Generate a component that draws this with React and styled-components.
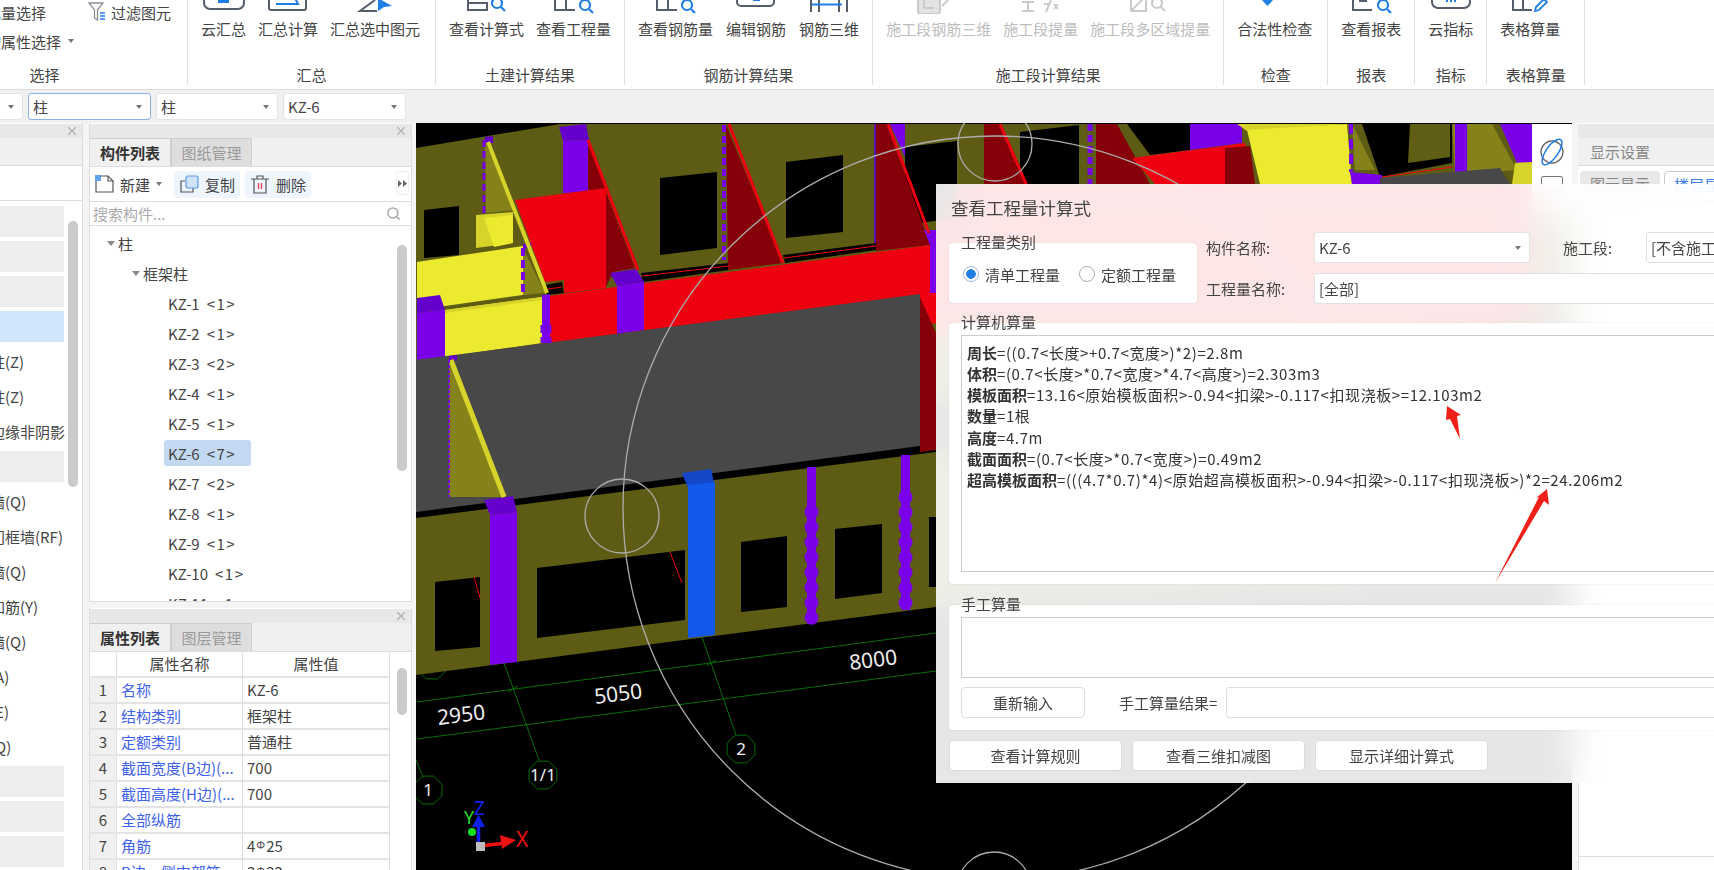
import React from "react";
import styled, { createGlobalStyle } from "styled-components";
import { X, Search } from "lucide-react";

const GlobalStyle = createGlobalStyle`
  html, body {
    margin: 0;
    padding: 0;
    width: 1714px;
    height: 870px;
    overflow: hidden;
    background: #f5f5f5;
  }
  * { box-sizing: border-box; }
  body {
    font-family: "Noto Sans CJK SC", "Noto Sans", sans-serif;
    font-size: 15px;
    color: #444;
  }
`;

const Rebar = styled.span`
  position: relative;
  top: -3px;
  margin: 0 1px;
  font-size: 11px;
`;

// ribbon icons are cut off by the top of the window, only the lower part shows
const gray = "#565e6c";
const blue = "#1f7de6";
const off = "#cbcbcb";

const Mag = ({ x, y, r = 5, c = blue }) => (
  <g fill="none" stroke={c} strokeWidth="2.2">
    <circle cx={x} cy={y} r={r} />
    <path d={`M${x + r - 1} ${y + r - 1}l4 4`} />
  </g>
);

const icons = {
  cloud: (
    <>
      <rect x="5" y="-9" width="40" height="18" rx="6" fill="none" stroke={gray} strokeWidth="2" />
      <rect x="19" y="-3" width="11" height="6" fill={blue} />
    </>
  ),
  sum: (
    <>
      <rect x="6" y="-9" width="37" height="19" rx="2" fill="none" stroke={gray} strokeWidth="2" />
      <path d="M13 4h22l-4-8" fill="none" stroke={blue} strokeWidth="2" />
    </>
  ),
  pick: (
    <>
      <path d="M25 0L10 11h17" fill="none" stroke={gray} strokeWidth="2" />
      <path d="M28-2l14 8-8 1-6 4z" fill={blue} />
    </>
  ),
  calc: (
    <>
      <path d="M6-3v13h19V3H6" fill="none" stroke={gray} strokeWidth="2" />
      <Mag x={35} y={3} />
    </>
  ),
  qty: (
    <>
      <path d="M6-5v15h20M17-5v15" fill="none" stroke={gray} strokeWidth="2" />
      <Mag x={36} y={5} />
    </>
  ),
  edit: (
    <>
      <rect x="6" y="-11" width="37" height="17" rx="4" fill="none" stroke={gray} strokeWidth="2" />
      <rect x="22" y="-2" width="7" height="3" fill={blue} />
    </>
  ),
  rebar3d: (
    <>
      <path d="M7 0v12M15 0v12M35 0v12M43 0v12" fill="none" stroke={gray} strokeWidth="2" />
      <path d="M8 4.5h30" fill="none" stroke={blue} strokeWidth="2" />
    </>
  ),
  off3d: (
    <>
      <rect x="4" y="-8" width="22" height="22" rx="3" fill="#e3e3e3" stroke={off} strokeWidth="2" />
      <path d="M10 0v8h10M28 6l6-6" fill="none" stroke={off} strokeWidth="2" />
    </>
  ),
  offFx: (
    <path d="M6 2h12M12 2v9M6 11h12M30 12l5-12M28 4h6M38 4l4 5M42 4l-4 5" fill="none" stroke={off} strokeWidth="2" />
  ),
  offArea: (
    <>
      <rect x="6" y="-4" width="15" height="15" fill="none" stroke={off} strokeWidth="2" />
      <path d="M7 10L20-3" stroke={off} strokeWidth="2" />
      <Mag x={32} y={3} r={5} c={off} />
    </>
  ),
  check: <path d="M11-1h13l-6.5 7z" fill={blue} />,
  report: (
    <>
      <path d="M7-5v15h19" fill="none" stroke={gray} strokeWidth="2" />
      <rect x="13" y="-1" width="8" height="3" fill={gray} />
      <Mag x={37} y={5} />
    </>
  ),
  index: (
    <>
      <rect x="6" y="-11" width="38" height="19" rx="6" fill="none" stroke={gray} strokeWidth="2" />
      <path d="M21 0v2M25-1v3M29 0v2" stroke={blue} strokeWidth="2" />
    </>
  ),
  table: (
    <>
      <path d="M8-5v15h19M18-5v15" fill="none" stroke={gray} strokeWidth="2" />
      <path d="M30 11l1-4 8-8 3 3-8 8z" fill="none" stroke={blue} strokeWidth="1.8" />
    </>
  ),
};

const RibbonBtn = ({ icon, label, disabled }) => (
  <RibbonButton $disabled={disabled}>
    <svg width="50" height="14" viewBox="0 0 50 14">{icons[icon]}</svg>
    <span>{label}</span>
  </RibbonButton>
);

const ribbonGroups = [
  { title: "汇总", pad: 15, items: [["cloud", "云汇总"], ["sum", "汇总计算"], ["pick", "汇总选中图元"]] },
  { title: "土建计算结果", items: [["calc", "查看计算式"], ["qty", "查看工程量"]] },
  { title: "钢筋计算结果", gap: 13, items: [["qty", "查看钢筋量"], ["edit", "编辑钢筋"], ["rebar3d", "钢筋三维"]] },
  { title: "施工段计算结果", off: true, items: [["off3d", "施工段钢筋三维"], ["offFx", "施工段提量"], ["offArea", "施工段多区域提量"]] },
  { title: "检查", pad: 15, items: [["check", "合法性检查"]] },
  { title: "报表", items: [["report", "查看报表"]] },
  { title: "指标", items: [["index", "云指标"]] },
  { title: "表格算量", width: 98, items: [["table", "表格算量"]] },
];

const leftItems = [
  null, null, null, { active: true }, { text: "构造柱(Z)" }, { text: "砌体柱(Z)" }, { text: "约束边缘非阴影" },
  null, { text: "砌体墙(Q)" }, { text: "人防门框墙(RF)" }, { text: "砌体墙(Q)" }, { text: "砌体加筋(Y)" },
  { text: "保温墙(Q)" }, { text: "暗梁(A)" }, { text: "墙垛(E)" }, { text: "幕墙(Q)" }, null, null, null,
];

const kzList = [
  ["KZ-1", 1], ["KZ-2", 1], ["KZ-3", 2], ["KZ-4", 1], ["KZ-5", 1], ["KZ-6", 7],
  ["KZ-7", 2], ["KZ-8", 1], ["KZ-9", 1], ["KZ-10", 1], ["KZ-11", 1],
];

const props = [
  ["名称", "KZ-6"],
  ["结构类别", "框架柱"],
  ["定额类别", "普通柱"],
  ["截面宽度(B边)(...", "700"],
  ["截面高度(H边)(...", "700"],
  ["全部纵筋", ""],
  ["角筋", <>4<Rebar>Φ</Rebar>25</>],
  ["B边一侧中部筋", <>3<Rebar>Φ</Rebar>22</>],
];

const formulas = [
  ["周长", "=((0.7<长度>+0.7<宽度>)*2)=2.8m"],
  ["体积", "=(0.7<长度>*0.7<宽度>*4.7<高度>)=2.303m3"],
  ["模板面积", "=13.16<原始模板面积>-0.94<扣梁>-0.117<扣现浇板>=12.103m2"],
  ["数量", "=1根"],
  ["高度", "=4.7m"],
  ["截面面积", "=(0.7<长度>*0.7<宽度>)=0.49m2"],
  ["超高模板面积", "=(((4.7*0.7)*4)<原始超高模板面积>-0.94<扣梁>-0.117<扣现浇板>)*2=24.206m2"],
];

// 3D model, in page coordinates (the svg viewBox starts at the canvas corner)
const olive = "#5e5c14";
const fin = "#85821a";
const yellow = "#ecea2e";
const yellow2 = "#d6d32a";
const red = "#ee0010";
const dark = "#850008";
const purple = "#7a00ea";
const cap = "#6500cc";
const wallGray = "#484848";

const shapes = [
  [olive, "416,148 560,124 1572,124 1572,330 416,470"],
  // things behind the dialog, they only tint its glass
  [red, "936,186 1532,186 1532,335 936,335"],
  [olive, "936,450 1532,400 1532,560 936,607"],
  // back wall windows
  ["#000", "424,210 459,206 459,255 424,258"],
  ["#000", "660,178 717,172 717,248 660,255"],
  ["#000", "786,162 843,155 843,232 786,238"],
  ["#000", "905,147 957,141 957,218 905,225"],
  ["#000", "1020,132 1079,125 1079,184 1020,184"],
  ["#000", "1127,124 1190,124 1190,150 1150,155"],
  ["#000", "1362,124 1452,124 1452,163 1380,177"],
  ["#605e14", "1410,124 1450,124 1450,157 1408,163"],
  ["#000", "641,273 729,263 729,270 643,282"],
  ["#000", "783,255 876,243 876,250 785,263"],
  // fins and top columns
  [cap, "559,127 586,124 589,140 563,141"],
  [purple, "563,141 588,140 588,192 563,193"],
  [dark, "588,140 606,190 588,190"],
  [red, "515,200 606,188 606,288 564,293 564,280 545,282"],
  [dark, "606,192 635,268 613,272 606,287"],
  [dark, "726,125 783,263 728,270"],
  ["#5a10b0", "874,124 877,124 877,243 874,243"],
  [dark, "876,124 887,124 925,230 930,245 876,251"],
  [purple, "890,124 905,124 905,157"],
  [red, "548,296 930,245 936,244 1400,200 1400,300 548,343"],
  [purple, "924,230 936,230 936,293 930,293 930,245"],
  [cap, "610,273 636,269 644,282 617,286"],
  [purple, "617,286 644,282 644,330 617,334"],
  [dark, "984,124 1000,124 1025,184 984,184"],
  [dark, "1096,124 1117,124 1150,184 1096,184"],
  [red, "1132,158 1245,143 1255,184 1155,184"],
  [purple, "1190,124 1242,124 1242,143 1190,150"],
  [dark, "1225,148 1250,146 1255,184 1225,184"],
  [yellow2, "1237,124 1347,124 1247,131"],
  [yellow, "1247,130 1347,124 1352,184 1260,184"],
  [fin, "1352,124 1375,170 1355,170"],
  [fin, "1452,124 1492,124 1517,170 1455,175"],
  [purple, "1455,124 1467,124 1467,172 1455,175"],
  [purple, "1350,172 1382,175 1382,184 1352,184"],
  [wallGray, "1380,178 1500,168 1510,184 1380,184"],
  [purple, "1500,124 1532,124 1532,162 1517,163"],
  [yellow2, "1515,163 1532,162 1532,184 1512,184"],
  // left side, yellow block
  [fin, "485,142 516,210 486,213"],
  [yellow2, "476,215 513,212 513,243 476,248"],
  [yellow, "484,218 513,215 513,243 494,247"],
  [yellow, "417,262 523,246 523,295 417,310"],
  [fin, "523,248 545,293 523,295"],
  ["#000", "545,285 562,282 564,293 547,295"],
  [yellow, "445,310 542,297 542,343 445,357"],
  [yellow2, "445,310 542,297 542,300 445,313"],
  [purple, "542,295 550,294 550,343 542,343"],
  [cap, "417,298 440,295 445,310 417,313"],
  [purple, "417,313 445,310 445,357 417,360"],
  [cap, "485,137 493,136 493,143 485,143"],
  [cap, "523,244 531,243 531,248 523,249"],
  // gray wall
  [wallGray, "416,360 920,294 920,446 416,512"],
  [dark, "920,297 936,333 936,450 920,452"],
  [fin, "449,360 505,497 449,497"],
  [cap, "449,356 457,355 457,360 449,361"],
  // front wall
  [olive, "416,518 936,452 936,607 416,675"],
  ["#000", "435,582 480,577 480,647 435,651"],
  ["#000", "537,568 685,550 685,620 537,638"],
  ["#000", "741,542 787,536 787,607 741,612"],
  ["#000", "835,529 882,524 882,593 835,599"],
  ["#000", "929,517 936,517 936,587 929,587"],
  [cap, "484,500 513,496 517,512 490,515"],
  [purple, "490,515 517,512 517,662 490,665"],
  ["#1248c8", "682,473 711,469 715,487 688,488"],
  ["#1458ea", "688,485 715,482 715,635 688,638"],
];

const lines = [
  [red, 3, "M588 140L638 270"],
  [red, 3, "M729 124L783 263"],
  [red, 3, "M888 124L929 233"],
  [red, 3, "M1000 124L1027 186"],
  [red, 1, "M642 276L729 266"],
  [red, 1, "M784 258L876 246"],
  [red, 1, "M1382 177L1452 167"],
  [red, 1, "M548 289L562 287"],
  [red, 1, "M474 577L480 598"],
  [red, 1, "M670 552L682 583"],
  [yellow2, 4, "M488 142L547 293"],
  [yellow2, 5, "M451 360L504 497"],
  ["#0a6e0a", 1, "M417 702L936 633"],
  ["#0a6e0a", 1, "M417 739L936 671"],
  ["#0a6e0a", 1, "M504 663L539 760"],
  ["#0a6e0a", 1, "M702 637L736 735"],
  ["#0a6e0a", 1, "M416 760L423 777"],
  ["#0a6e0a", 1, "M508 692L518 686"],
  ["#0a6e0a", 1, "M706 666L716 660"],
];

// x, from, to, width, dash, gap
const beads = [
  [484, 140, 215, 3, 7, 4],
  [523, 248, 295, 4, 8, 4],
  [546, 325, 343, 11, 8, 4],
  [724, 125, 260, 4, 7, 4],
  [1090, 124, 184, 5, 7, 4],
  [1351, 124, 172, 4, 10, 5],
  [449, 360, 497, 2, 3, 2],
];

const bumps = [
  [811.5, 512, 618],
  [905.5, 497, 605],
];

const hexes = [
  [428, 790, "1"],
  [543, 775, "1/1"],
  [741, 749, "2"],
  [432, 665, ""],
];

const dims = [
  [462, 722, "2950"],
  [619, 701, "5050"],
  [874, 667, "8000"],
];

const hexPoints = (cx, cy, r) =>
  [...Array(8)]
    .map((_, i) => {
      const a = (Math.PI / 4) * i + Math.PI / 8;
      return `${(cx + r * Math.cos(a)).toFixed(1)},${(cy + r * Math.sin(a)).toFixed(1)}`;
    })
    .join(" ");

const Model = () => (
  <ModelSvg viewBox="416 123 1156 747">
    {hexes.map(([x, y]) => (
      <polygon key={x} points={hexPoints(x, y, 15)} fill="none" stroke="#0a6e0a" strokeWidth="1" />
    ))}
    {shapes.map(([c, p], i) => (
      <polygon key={i} fill={c} points={p} />
    ))}
    {lines.map(([c, w, d], i) => (
      <path key={i} d={d} stroke={c} strokeWidth={w} fill="none" />
    ))}
    <path d="M811.5 467V623M905.5 455V610" stroke={purple} strokeWidth="9" />
    {beads.map(([x, a, b, w, dash, gap], i) => (
      <path key={i} d={`M${x} ${a}V${b}`} stroke={purple} strokeWidth={w} strokeDasharray={`${dash} ${gap}`} fill="none" />
    ))}
    {bumps.map(([x, a, b]) => (
      <path key={x} d={`M${x} ${a}V${b}`} stroke={purple} strokeWidth="14" strokeLinecap="round" strokeDasharray="0.1 15" fill="none" />
    ))}
    <g fill="none" stroke="#acacac" strokeWidth="1.3">
      <circle cx="995" cy="508" r="372" />
      <circle cx="995" cy="144" r="37" />
      <circle cx="622" cy="516" r="37" />
      <circle cx="994" cy="889" r="37" />
    </g>
    {hexes.map(([x, y, t]) => (
      <AxisText key={x} x={x} y={y + 6} textAnchor="middle" fontSize="17" fill="#eee">
        {t}
      </AxisText>
    ))}
    {dims.map(([x, y, t]) => (
      <AxisText key={t} x={x} y={y} textAnchor="middle" fontSize="21" fill="#eee" transform={`rotate(-7 ${x} ${y})`}>
        {t}
      </AxisText>
    ))}
    <path d="M480 846L506 843" stroke="#ee1111" strokeWidth="3.5" />
    <polygon points="516,840 500,835 502,849" fill="#ee1111" />
    <AxisText x="516" y="847" fontSize="21" fill="#ee1111">X</AxisText>
    <path d="M478.5 842V824" stroke="#1020ee" strokeWidth="3.5" />
    <polygon points="478.5,815 472,827 485,827" fill="#1020ee" />
    <AxisText x="474" y="815" fontSize="19" fill="#1020ee">Z</AxisText>
    <AxisText x="464" y="824" fontSize="18" fill="#22dd22">Y</AxisText>
    <circle cx="472" cy="832" r="4" fill="#18e018" />
    <rect x="476" y="842" width="9" height="9" fill="#bdbdbd" />
  </ModelSvg>
);

const Dropdown = ({ value, width, focus, height = 27 }) => (
  <SelectBox $width={width} $focus={focus} $height={height}>
    <span>{value}</span>
    <Caret />
  </SelectBox>
);

const App = () => (
  <>
    <GlobalStyle />
    <Page>
      <Ribbon>
        <SelectGroup>
          <SelectBody>
            <PickColumn>
              <PickRow>批量选择</PickRow>
              <PickRow>
                按属性选择
                <Caret $left={7} />
              </PickRow>
            </PickColumn>
            <FilterRow>
              <svg width="19" height="22" viewBox="0 0 19 22">
                <path d="M1 2h14l-5.5 7v10l-3-2V9z" fill="none" stroke="#8a8f98" strokeWidth="1.3" />
                <path d="M12 12h5M12 15h5M12 18h5" stroke={blue} strokeWidth="1.3" />
              </svg>
              过滤图元
            </FilterRow>
          </SelectBody>
          <GroupTitle>选择</GroupTitle>
        </SelectGroup>
        {ribbonGroups.map((g) => (
          <RibbonGroup key={g.title} $width={g.width}>
            <GroupBody $gap={g.gap} $pad={g.pad}>
              {g.items.map(([icon, label]) => (
                <RibbonBtn key={label} icon={icon} label={label} disabled={g.off} />
              ))}
            </GroupBody>
            <GroupTitle>{g.title}</GroupTitle>
          </RibbonGroup>
        ))}
      </Ribbon>

      <FilterBar>
        <Dropdown value="" width={100} />
        <Dropdown value="柱" width={123} focus />
        <Dropdown value="柱" width={122} />
        <Dropdown value="KZ-6" width={123} />
      </FilterBar>

      <Workspace>
        <NavPanel>
          <PaneHeader>
            <X size={14} />
          </PaneHeader>
          <NavTabs />
          <NavTools />
          <NavList>
            {leftItems.map((it, i) =>
              it && it.text ? (
                <NavText key={i}>{it.text}</NavText>
              ) : (
                <NavBlock key={i} $active={it && it.active} />
              )
            )}
          </NavList>
          <Thumb $top={98} $left={108} $height={266} />
        </NavPanel>

        <MiddleColumn>
          <TreePane>
            <PaneHeader>
              <X size={14} />
            </PaneHeader>
            <TabRow>
              <Tab $active>构件列表</Tab>
              <Tab>图纸管理</Tab>
            </TabRow>
            <ToolRow>
              <ToolItem>
                <svg width="20" height="20" viewBox="0 0 20 20">
                  <path d="M6 2h8l5 5v11H2V7" fill="none" stroke="#555" strokeWidth="1.2" />
                  <path d="M14 2v5h5" fill="none" stroke="#555" strokeWidth="1.2" />
                  <rect x="1" y="1" width="6" height="6" fill={blue} opacity=".7" />
                </svg>
                新建
                <Caret />
              </ToolItem>
              <ToolItem $boxed>
                <svg width="20" height="20" viewBox="0 0 20 20">
                  <path d="M6 7H2v11h12v-4" fill="none" stroke="#555" strokeWidth="1.2" />
                  <rect x="7" y="2" width="12" height="12" rx="2" fill="#cfe3fb" stroke="#5a9be8" strokeWidth="1.2" />
                </svg>
                复制
              </ToolItem>
              <ToolItem $boxed>
                <svg width="20" height="20" viewBox="0 0 20 20">
                  <path d="M4 5v14h12V5M1 5h18M7 5V2h6v3" fill="none" stroke="#555" strokeWidth="1.2" />
                  <path d="M8.5 9v6M11.5 9v6" stroke="#e8455a" strokeWidth="1.4" />
                </svg>
                删除
              </ToolItem>
              <MoreButton>
                <svg width="9" height="7" viewBox="0 0 9 7">
                  <path d="M0 0l4 3.5-4 3.5zM5 0l4 3.5-4 3.5z" fill="#666" />
                </svg>
              </MoreButton>
            </ToolRow>
            <SearchRow>
              搜索构件...
              <Search size={15} color="#aaa" strokeWidth={2.4} />
            </SearchRow>
            <Tree>
              <TreeRow $indent={17}>
                <TreeCaret />柱
              </TreeRow>
              <TreeRow $indent={42}>
                <TreeCaret />框架柱
              </TreeRow>
              {kzList.map(([name, n]) => (
                <TreeRow key={name} $indent={74}>
                  <TreeLeaf $active={name === "KZ-6"}>
                    {name}
                    <TreeCount>&lt;{n}&gt;</TreeCount>
                  </TreeLeaf>
                </TreeRow>
              ))}
            </Tree>
            <Thumb $top={122} $left={307} $height={226} />
          </TreePane>

          <PropPane>
            <PaneHeader>
              <X size={14} />
            </PaneHeader>
            <TabRow>
              <Tab $active>属性列表</Tab>
              <Tab>图层管理</Tab>
            </TabRow>
            <PropGrid>
              <PropHead />
              <PropHead>属性名称</PropHead>
              <PropHead>属性值</PropHead>
              {props.map(([name, value], i) => (
                <React.Fragment key={i}>
                  <PropIndex>{i + 1}</PropIndex>
                  <PropName>{name}</PropName>
                  <PropValue>{value}</PropValue>
                </React.Fragment>
              ))}
            </PropGrid>
            <Thumb $top={60} $left={307} $height={47} />
          </PropPane>
        </MiddleColumn>

        <Canvas>
          <Model />
          <ViewTools>
            <svg width="30" height="30" viewBox="0 0 30 30">
              <circle cx="15" cy="15" r="11" fill="none" stroke="#666" strokeWidth="1.3" />
              <ellipse cx="15" cy="15" rx="15" ry="6" transform="rotate(-55 15 15)" fill="none" stroke={blue} strokeWidth="1.5" />
            </svg>
            <ViewSquare />
          </ViewTools>
        </Canvas>

        <SidePanel>
          <PaneHeader />
          <SideTitle>显示设置</SideTitle>
          <SideTabs>
            <SideTab>图元显示</SideTab>
            <SideTab $active>楼层显示</SideTab>
          </SideTabs>
          <SideBody />
          <SideFoot />
        </SidePanel>
      </Workspace>

      <Dialog>
        <DialogTitle>查看工程量计算式</DialogTitle>
        <DialogBody>
          <TopRow>
            <TypeBox>
              <Legend>工程量类别</Legend>
              <RadioLabel>
                <Radio $checked />
                清单工程量
              </RadioLabel>
              <RadioLabel>
                <Radio />
                定额工程量
              </RadioLabel>
            </TypeBox>
            <FieldColumn>
              <FieldRow>
                <FieldLabel $width={108}>构件名称:</FieldLabel>
                <Dropdown value="KZ-6" width={216} height={31} />
                <FieldLabel $width={83} $left={33}>施工段:</FieldLabel>
                <TextField $width={210}>[不含施工段]</TextField>
              </FieldRow>
              <FieldRow>
                <FieldLabel $width={108}>工程量名称:</FieldLabel>
                <TextField $width={600}>[全部]</TextField>
              </FieldRow>
            </FieldColumn>
          </TopRow>

          <FormulaGroup>
            <Legend>计算机算量</Legend>
            <FormulaArea>
              {formulas.map(([k, v]) => (
                <FormulaLine key={k}>
                  <b>{k}</b>
                  {v}
                </FormulaLine>
              ))}
            </FormulaArea>
          </FormulaGroup>

          <ManualGroup>
            <Legend>手工算量</Legend>
            <ManualArea />
            <ManualRow>
              <DialogButton $width={124}>重新输入</DialogButton>
              <FieldLabel $left={34} $width={107}>手工算量结果=</FieldLabel>
              <TextField $width={600} />
            </ManualRow>
          </ManualGroup>

          <FootRow>
            <DialogButton $width={173}>查看计算规则</DialogButton>
            <DialogButton $width={173}>查看三维扣减图</DialogButton>
            <DialogButton $width={173}>显示详细计算式</DialogButton>
          </FootRow>
        </DialogBody>

        {/* red arrows drawn on the screenshot */}
        <Arrows viewBox="936 184 778 599">
          <polygon points="1447,406 1461,415 1457,416 1460,439 1450,419 1446,420" fill="#f02018" />
          <polygon points="1547,489 1549,505 1544,501 1495,583 1539,497 1536,498" fill="#f02018" />
        </Arrows>
      </Dialog>
    </Page>
  </>
);

const Page = styled.div`
  position: relative;
  width: 1714px;
  height: 870px;
  overflow: hidden;
`;

const Ribbon = styled.div`
  display: flex;
  height: 90px;
  background: #fff;
  border-bottom: 1px solid #dcdcdc;
  overflow: hidden;
`;

const RibbonGroup = styled.div`
  display: flex;
  flex-direction: column;
  flex: none;
  width: ${(p) => (p.$width ? p.$width + "px" : "auto")};
  height: 85px;
  border-right: 1px solid #e0e0e0;
`;

const SelectGroup = styled(RibbonGroup)`
  width: 286px;
  margin-left: -98px;
`;

const GroupBody = styled.div`
  display: flex;
  gap: ${(p) => p.$gap || 12}px;
  height: 66px;
  padding: 0 ${(p) => p.$pad || 13}px 0 13px;
`;

const SelectBody = styled(GroupBody)`
  margin-top: -2px;
  height: 68px;
`;

const GroupTitle = styled.div`
  height: 20px;
  line-height: 20px;
  text-align: center;
  color: #444;
`;

const RibbonButton = styled.div`
  display: flex;
  flex-direction: column;
  align-items: center;
  white-space: nowrap;
  color: ${(p) => (p.$disabled ? "#bdbdbd" : "#444")};

  svg {
    display: block;
    flex: none;
    margin: 0 -15px;
  }

  span {
    margin-top: 5px;
    line-height: 20px;
  }
`;

const PickColumn = styled.div`
  flex: none;
  width: 90px;
  margin-left: 71px;
  display: flex;
  flex-direction: column;
  gap: 1px;
`;

const PickRow = styled.div`
  display: flex;
  align-items: center;
  height: 28px;
  white-space: nowrap;
`;

const FilterRow = styled(PickRow)`
  flex: none;
  gap: 4px;
`;

const Caret = styled.i`
  flex: none;
  width: 0;
  height: 0;
  margin-left: ${(p) => (p.$left ? p.$left + "px" : "0")};
  border-left: 3px solid transparent;
  border-right: 3px solid transparent;
  border-top: 4px solid #777;
`;

const FilterBar = styled.div`
  display: flex;
  gap: 5px;
  height: 33px;
  padding-top: 3px;
  margin-left: -77px;
  background: #f0f0f0;
`;

const SelectBox = styled.div`
  display: flex;
  align-items: center;
  justify-content: space-between;
  flex: none;
  width: ${(p) => p.$width}px;
  height: ${(p) => p.$height}px;
  padding: 0 8px 0 4px;
  background: #fff;
  border: 1px solid ${(p) => (p.$focus ? "#8ab4e8" : "#e4e4e4")};
  border-radius: 3px;
  white-space: nowrap;
`;

const Workspace = styled.div`
  display: flex;
  height: 747px;
  margin-left: -40px;
`;

const NavPanel = styled.div`
  position: relative;
  flex: none;
  width: 123px;
  background: #fff;
  border-right: 1px solid #ddd;
`;

const PaneHeader = styled.div`
  display: flex;
  align-items: center;
  justify-content: flex-end;
  height: 14px;
  margin-top: 1px;
  padding-right: 3px;
  background: #e8e8e8;
  color: #b0b0b0;
`;

const NavTabs = styled.div`
  height: 28px;
  background: #f0f0f0;
  border-bottom: 1px solid #ddd;
`;

const NavTools = styled.div`
  height: 35px;
  border-bottom: 1px solid #ddd;
`;

const NavList = styled.div`
  display: flex;
  flex-direction: column;
  gap: 4px;
  width: 104px;
  padding-top: 5px;
`;

const NavBlock = styled.div`
  height: 31px;
  background: ${(p) => (p.$active ? "#d2e6fb" : "#ededed")};
`;

const NavText = styled.div`
  height: 31px;
  line-height: 31px;
  white-space: nowrap;
`;

const Thumb = styled.div`
  position: absolute;
  top: ${(p) => p.$top}px;
  left: ${(p) => p.$left}px;
  width: 10px;
  height: ${(p) => p.$height}px;
  background: #cbcbcb;
  border-radius: 5px;
`;

const MiddleColumn = styled.div`
  display: flex;
  flex-direction: column;
  gap: 6px;
  flex: none;
  width: 323px;
  margin-left: 6px;
`;

const TreePane = styled.div`
  position: relative;
  flex: none;
  height: 479px;
  background: #fff;
  border: 1px solid #ddd;
  border-top: none;
  overflow: hidden;
`;

const PropPane = styled(TreePane)`
  flex: 1;
  height: auto;
  border-bottom: none;
`;

const TabRow = styled.div`
  display: flex;
  height: 29px;
  background: #f0f0f0;
  border-bottom: 1px solid #ddd;
`;

const Tab = styled.div`
  width: 81px;
  line-height: 27px;
  text-align: center;
  color: ${(p) => (p.$active ? "#333" : "#9a9a9a")};
  font-weight: ${(p) => (p.$active ? 700 : 400)};
  background: ${(p) => (p.$active ? "#f0f0f0" : "#dedede")};
  border: 1px solid #cfcfcf;
  border-left: ${(p) => (p.$active ? "none" : "1px solid #cfcfcf")};
  border-bottom: none;
`;

const ToolRow = styled.div`
  position: relative;
  display: flex;
  align-items: center;
  gap: 5px;
  height: 35px;
  padding-left: 4px;
  border-bottom: 1px solid #ddd;
`;

const ToolItem = styled.div`
  display: flex;
  align-items: center;
  gap: 6px;
  height: 27px;
  padding: ${(p) => (p.$boxed ? "0 5px" : "0 7px 0 0")};
  background: ${(p) => (p.$boxed ? "#eef5fd" : "transparent")};
  border-radius: 4px;
  white-space: nowrap;
`;

const MoreButton = styled.div`
  position: absolute;
  right: 2px;
  top: 4px;
  display: flex;
  align-items: center;
  justify-content: center;
  width: 13px;
  height: 24px;
  background: #fff;
  border: 1px solid #eee;
  border-radius: 3px;
`;

const SearchRow = styled.div`
  display: flex;
  align-items: center;
  justify-content: space-between;
  height: 24px;
  padding: 0 10px 0 3px;
  color: #aaa;
  border-bottom: 1px solid #ddd;
`;

const Tree = styled.div`
  padding-top: 2px;
`;

const TreeRow = styled.div`
  display: flex;
  align-items: center;
  height: 30px;
  padding-left: ${(p) => p.$indent}px;
  white-space: nowrap;
`;

const TreeCaret = styled.i`
  width: 0;
  height: 0;
  margin-right: 3px;
  border-left: 4px solid transparent;
  border-right: 4px solid transparent;
  border-top: 5px solid #888;
`;

const TreeLeaf = styled.div`
  display: flex;
  align-items: center;
  width: 87px;
  height: 26px;
  padding-left: 4px;
  border-radius: 3px;
  background: ${(p) => (p.$active ? "#c2d9f1" : "transparent")};
`;

const TreeCount = styled.span`
  margin-left: 7px;
  letter-spacing: 1.5px;
`;

const PropGrid = styled.div`
  display: grid;
  grid-template-columns: 27px 126px 147px;
  grid-auto-rows: 26px;
  width: 300px;
  border-right: 1px solid #ddd;
`;

const PropHead = styled.div`
  line-height: 24px;
  text-align: center;
  border-right: 1px solid #ddd;
  border-bottom: 2px solid #e4e4e4;
`;

const PropIndex = styled(PropHead)`
  background: #f0f0f0;
`;

const PropName = styled(PropHead)`
  padding-left: 4px;
  text-align: left;
  color: #3f62ec;
  white-space: nowrap;
  overflow: hidden;
`;

const PropValue = styled(PropHead)`
  padding-left: 4px;
  text-align: left;
`;

const Canvas = styled.div`
  position: relative;
  flex: none;
  width: 1156px;
  margin-left: 4px;
  background: #000;
  overflow: hidden;
`;

const ModelSvg = styled.svg`
  display: block;
  width: 100%;
  height: 100%;
`;

const AxisText = styled.text`
  font-family: "Noto Sans", sans-serif;
`;

const ViewTools = styled.div`
  position: absolute;
  top: 1px;
  right: 0;
  display: flex;
  flex-direction: column;
  align-items: center;
  gap: 9px;
  width: 40px;
  height: 90px;
  padding-top: 13px;
  background: #fff;
`;

const ViewSquare = styled.div`
  width: 22px;
  height: 16px;
  border: 1px solid #777;
  border-radius: 2px;
`;

const SidePanel = styled.div`
  display: flex;
  flex-direction: column;
  flex: none;
  width: 140px;
  margin-left: 6px;
  background: #fff;
`;

const SideTitle = styled.div`
  height: 28px;
  line-height: 28px;
  padding-left: 12px;
  color: #888;
  background: #f0f0f0;
  border-bottom: 1px solid #ddd;
`;

const SideTabs = styled.div`
  display: flex;
  gap: 4px;
  height: 30px;
  margin-top: 5px;
  padding-left: 2px;
`;

const SideTab = styled.div`
  width: 80px;
  flex: none;
  text-align: center;
  line-height: 26px;
  color: ${(p) => (p.$active ? "#3f7fe0" : "#888")};
  background: ${(p) => (p.$active ? "#fff" : "#e8e8e8")};
  border: ${(p) => (p.$active ? "1px solid #ccc" : "none")};
  border-radius: 4px 4px 0 0;
`;

const SideBody = styled.div`
  flex: 1;
  border: 1px solid #ddd;
`;

const SideFoot = styled.div`
  height: 13px;
  border-left: 1px solid #ddd;
`;

const Dialog = styled.div`
  position: absolute;
  top: 184px;
  left: 936px;
  width: 778px;
  height: 599px;
  background: rgba(255, 255, 255, 0.9);
  backdrop-filter: blur(18px);
  overflow: hidden;
`;

const DialogTitle = styled.div`
  height: 48px;
  padding-left: 15px;
  line-height: 48px;
  font-size: 17.5px;
  color: #444;
`;

const DialogBody = styled.div`
  display: flex;
  flex-direction: column;
  width: 900px;
  padding-left: 13px;
`;

const TopRow = styled.div`
  display: flex;
  height: 71px;
`;

const GroupBox = styled.div`
  position: relative;
  background: #fff;
  border-radius: 3px;
  box-shadow: 0 0 1px rgba(0, 0, 0, 0.3);
`;

const TypeBox = styled(GroupBox)`
  display: flex;
  gap: 19px;
  flex: none;
  width: 248px;
  height: 60px;
  margin-top: 11px;
  padding: 20px 0 0 14px;
`;

const Legend = styled.div`
  position: absolute;
  top: -12px;
  left: 12px;
  line-height: 22px;
  white-space: nowrap;
`;

const RadioLabel = styled.div`
  display: flex;
  align-items: center;
  gap: 6px;
  height: 22px;
  white-space: nowrap;
`;

const Radio = styled.i`
  flex: none;
  width: 16px;
  height: 16px;
  border: 1px solid ${(p) => (p.$checked ? "#9dbbe0" : "#aaa")};
  border-radius: 50%;
  background: ${(p) => (p.$checked ? "radial-gradient(circle, #1f7de6 0 4.5px, #fff 5px)" : "#fff")};
`;

const FieldColumn = styled.div`
  display: flex;
  flex-direction: column;
  gap: 10px;
  margin-left: 9px;
`;

const FieldRow = styled.div`
  display: flex;
  align-items: center;
  height: 31px;
`;

const FieldLabel = styled.div`
  flex: none;
  width: ${(p) => p.$width}px;
  margin-left: ${(p) => p.$left || 0}px;
  white-space: nowrap;
`;

const TextField = styled.div`
  flex: none;
  width: ${(p) => p.$width}px;
  height: 31px;
  padding-left: 4px;
  line-height: 29px;
  background: #fff;
  border: 1px solid #e0e0e0;
  border-radius: 3px;
  white-space: nowrap;
`;

const FormulaGroup = styled(GroupBox)`
  height: 261px;
  margin-top: 20px;
  padding: 12px 0 0 12px;
`;

const FormulaArea = styled.div`
  height: 237px;
  padding: 6px 5px;
  border: 1px solid #ccc;
  background: #fff;
`;

const FormulaLine = styled.div`
  height: 21.15px;
  line-height: 21.15px;
  color: #333;
  white-space: nowrap;
  font-size: 15px;
  letter-spacing: 0.6px;

  b {
    letter-spacing: 0;
  }
`;

const ManualGroup = styled(GroupBox)`
  height: 125px;
  margin-top: 21px;
  padding: 12px 0 0 12px;
`;

const ManualArea = styled.div`
  height: 61px;
  border: 1px solid #ccc;
`;

const ManualRow = styled.div`
  display: flex;
  align-items: center;
  margin-top: 9px;
`;

const DialogButton = styled.div`
  flex: none;
  width: ${(p) => p.$width}px;
  height: 31px;
  line-height: 29px;
  text-align: center;
  background: #fff;
  border: 1px solid #dcdcdc;
  border-radius: 4px;
`;

const FootRow = styled.div`
  display: flex;
  gap: 10px;
  margin-top: 10px;
`;

const Arrows = styled.svg`
  position: absolute;
  top: 0;
  left: 0;
  width: 778px;
  height: 599px;
  pointer-events: none;
`;

export default App;
